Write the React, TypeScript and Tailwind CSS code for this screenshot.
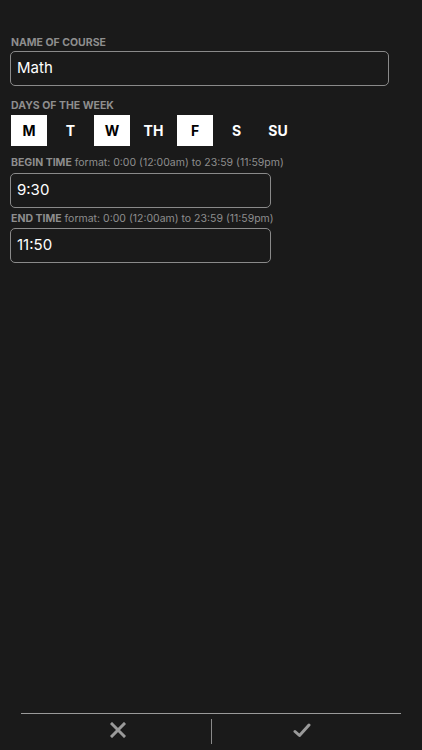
import React from "react";

const days = [
  { label: "M", on: true },
  { label: "T", on: false },
  { label: "W", on: true },
  { label: "TH", on: false },
  { label: "F", on: true },
  { label: "S", on: false },
  { label: "SU", on: false },
];

const font = { fontFamily: "Inter, 'Noto Sans', sans-serif" };

function Label({ title, hint }: { title: string; hint?: string }) {
  return (
    <div className="pt-px text-[10.5px] leading-[12px] text-[#8e8e8e]">
      <span className="font-bold">{title}</span>
      {hint && <span> {hint}</span>}
    </div>
  );
}

export default function App() {
  return (
    <div
      className="flex h-[750px] w-[422px] flex-col bg-[#1a1a1a] text-white"
      style={font}
    >
      <div className="flex-1 px-[10px] pt-[36px]">
        <div className="pl-px">
          <Label title="NAME OF COURSE" />
        </div>
        <div className="mt-[2px] flex h-[35px] w-[379px] items-center rounded-[5px] border border-[#8a8a8a] px-[6px] text-[15px]">
          Math
        </div>

        <div className="mt-[13px] pl-px">
          <Label title="DAYS OF THE WEEK" />
        </div>
        <div className="mt-[3px] flex gap-[5.5px] pl-px">
          {days.map((d) => (
            <div
              key={d.label}
              className={
                "flex h-[31px] w-[36px] items-center justify-center text-[14px] font-bold " +
                (d.on ? "bg-white text-black" : "text-white")
              }
            >
              {d.label}
            </div>
          ))}
        </div>

        <div className="mt-[10px] pl-px">
          <Label title="BEGIN TIME" hint="format: 0:00 (12:00am) to 23:59 (11:59pm)" />
        </div>
        <div className="mt-[4px] flex h-[35px] w-[261px] items-center rounded-[5px] border border-[#8a8a8a] px-[6px] text-[15px]">
          9:30
        </div>

        <div className="mt-[4px] pl-px">
          <Label title="END TIME" hint="format: 0:00 (12:00am) to 23:59 (11:59pm)" />
        </div>
        <div className="mt-[3px] flex h-[35px] w-[261px] items-center rounded-[5px] border border-[#8a8a8a] px-[6px] text-[15px]">
          11:50
        </div>
      </div>

      <div className="mx-[21px] mb-[6px] border-t border-[#9a9a9a]">
        <div className="flex h-[30px] items-center">
          <button className="flex flex-1 items-center justify-center pt-[2px]">
            <svg className="translate-x-[2px]" width="16" height="16" viewBox="0 0 16 16">
              <path
                d="M2 2 L14 14 M14 2 L2 14"
                stroke="#9a9a9a"
                strokeWidth="3"
                strokeLinecap="square"
              />
            </svg>
          </button>
          <div className="mt-[5px] h-[25px] w-px bg-[#8a8a8a]" />
          <button className="flex flex-1 items-center justify-center pt-[2px]">
            <svg className="-translate-x-[4px]" width="18" height="15" viewBox="0 0 18 15">
              <path
                d="M2 8.5 L6.5 12.5 L16 2"
                stroke="#9a9a9a"
                strokeWidth="3"
                fill="none"
                strokeLinecap="round"
                strokeLinejoin="round"
              />
            </svg>
          </button>
        </div>
      </div>
    </div>
  );
}
